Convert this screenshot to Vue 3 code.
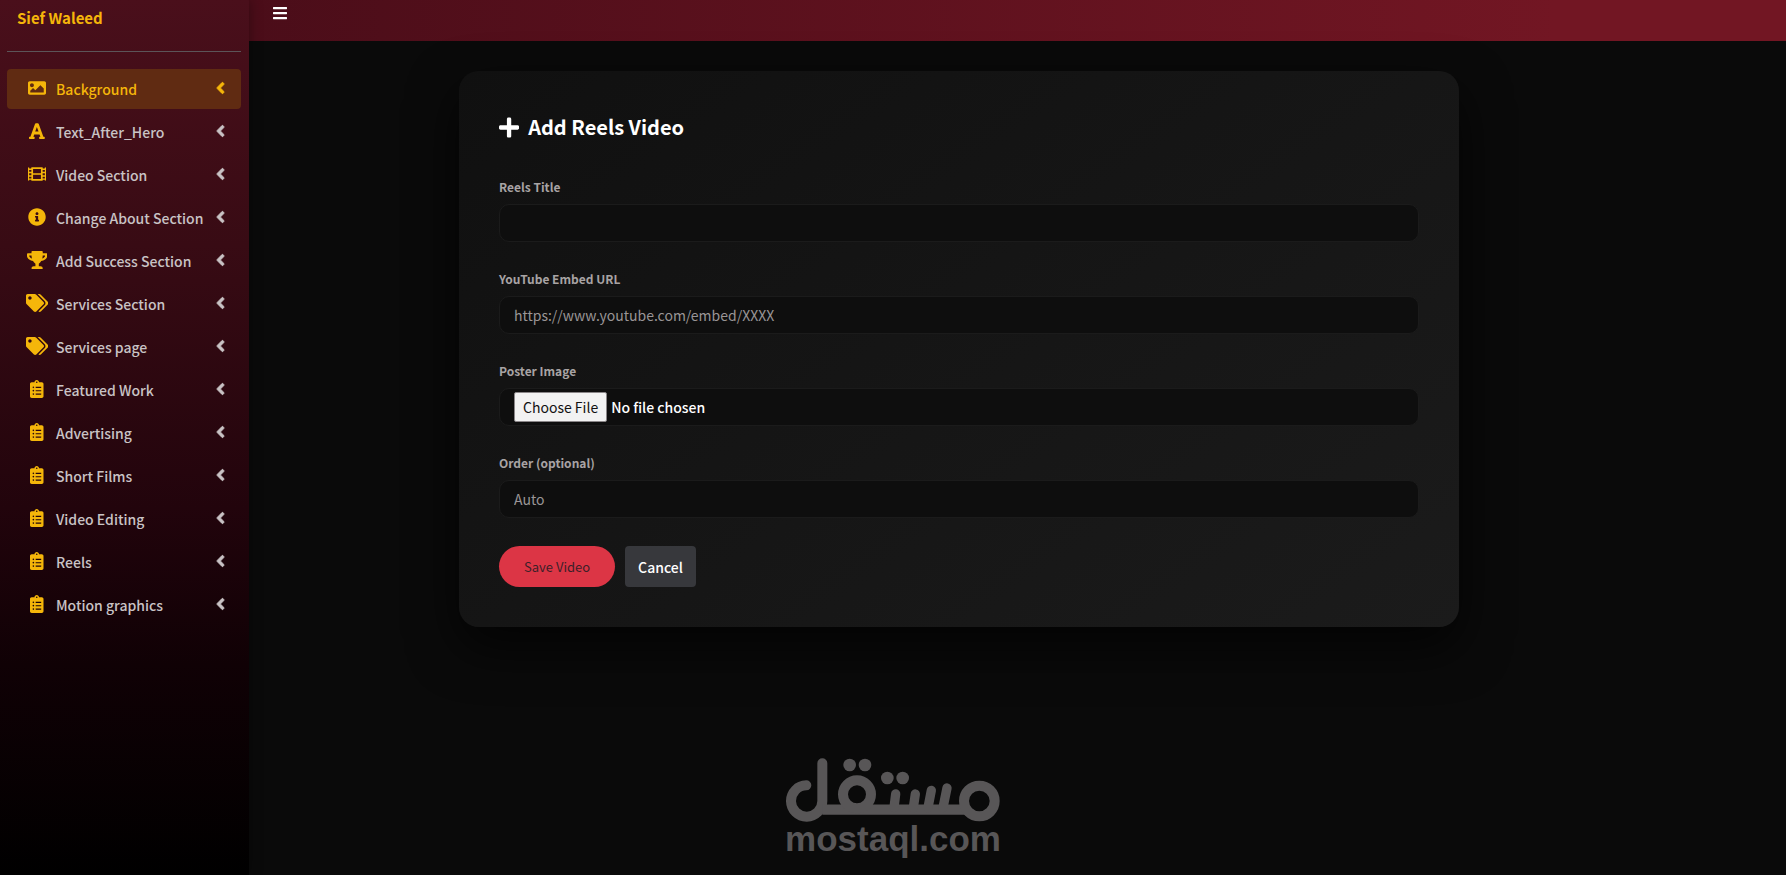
<script setup>
import { ref } from 'vue'

const icons = {
  image: {
    w: 512,
    d: 'M464 448H48c-26.51 0-48-21.49-48-48V112c0-26.51 21.49-48 48-48h416c26.51 0 48 21.49 48 48v288c0 26.51-21.49 48-48 48zM112 120c-30.928 0-56 25.072-56 56s25.072 56 56 56 56-25.072 56-56-25.072-56-56-56zM64 384h384V272l-87.515-87.515c-4.686-4.686-12.284-4.686-16.971 0L208 320l-55.515-55.515c-4.686-4.686-12.284-4.686-16.971 0L64 336v48z',
  },
  font: {
    w: 448,
    d: 'M432 416h-23.41L277.53 53.69A32 32 0 0 0 247.58 32h-47.16a32 32 0 0 0-29.95 21.69L39.41 416H16a16 16 0 0 0-16 16v32a16 16 0 0 0 16 16h128a16 16 0 0 0 16-16v-32a16 16 0 0 0-16-16h-19.58l23.3-64h152.56l23.3 64H304a16 16 0 0 0-16 16v32a16 16 0 0 0 16 16h128a16 16 0 0 0 16-16v-32a16 16 0 0 0-16-16zM176.85 272L224 142.51 271.15 272z',
  },
  film: {
    w: 512,
    d: 'M488 64h-8v20c0 6.6-5.4 12-12 12h-40c-6.6 0-12-5.4-12-12V64H96v20c0 6.6-5.4 12-12 12H44c-6.6 0-12-5.4-12-12V64h-8C10.7 64 0 74.7 0 88v336c0 13.3 10.7 24 24 24h8v-20c0-6.6 5.4-12 12-12h40c6.6 0 12 5.4 12 12v20h320v-20c0-6.6 5.4-12 12-12h40c6.6 0 12 5.4 12 12v20h8c13.3 0 24-10.7 24-24V88c0-13.3-10.7-24-24-24zM32 332h64v52H32zM32 236h64v52H32zM32 140h64v52H32zM144 112h224v120H144zM144 280h224v120H144zM416 332h64v52h-64zM416 236h64v52h-64zM416 140h64v52h-64z',
  },
  info: {
    w: 512,
    d: 'M256 8C119.043 8 8 119.083 8 256c0 136.997 111.043 248 248 248s248-111.003 248-248C504 119.083 392.957 8 256 8zm0 110c23.196 0 42 18.804 42 42s-18.804 42-42 42-42-18.804-42-42 18.804-42 42-42zm56 254c0 6.627-5.373 12-12 12h-88c-6.627 0-12-5.373-12-12v-24c0-6.627 5.373-12 12-12h12v-64h-12c-6.627 0-12-5.373-12-12v-24c0-6.627 5.373-12 12-12h64c6.627 0 12 5.373 12 12v100h12c6.627 0 12 5.373 12 12v24z',
  },
  trophy: {
    w: 576,
    d: 'M552 64H448V24c0-13.3-10.7-24-24-24H152c-13.3 0-24 10.7-24 24v40H24C10.7 64 0 74.7 0 88v56c0 35.7 22.5 72.4 61.9 100.7 31.5 22.7 69.8 37.1 110 41.7C203.3 338.5 240 360 240 360v72h-48c-35.3 0-64 20.7-64 56v12c0 6.6 5.4 12 12 12h296c6.6 0 12-5.4 12-12v-12c0-35.3-28.7-56-64-56h-48v-72s36.7-21.5 68.1-73.6c40.3-4.6 78.6-19 110-41.7 39.3-28.3 61.9-65 61.9-100.7V88c0-13.3-10.7-24-24-24zM99.3 192.8C74.9 175.2 64 155.6 64 144v-16h64.2c1 32.6 5.8 61.2 12.8 86.2-15.1-5.2-29.2-12.4-41.7-21.4zM512 144c0 16.1-17.7 36.1-35.3 48.8-12.5 9-26.7 16.2-41.8 21.4 7-25 11.8-53.6 12.8-86.2H512v16z',
  },
  tags: {
    w: 640,
    d: 'M497.941 225.941L286.059 14.059A48 48 0 0 0 252.118 0H48C21.49 0 0 21.49 0 48v204.118a48 48 0 0 0 14.059 33.941l211.882 211.882c18.744 18.745 49.136 18.746 67.882 0l204.118-204.118c18.745-18.745 18.745-49.137 0-67.882zM112 160c-26.51 0-48-21.49-48-48s21.49-48 48-48 48 21.49 48 48-21.49 48-48 48zm513.941 133.823L421.823 497.941c-18.745 18.745-49.137 18.745-67.882 0l-.36-.36L527.64 323.522c16.999-16.999 26.362-39.6 26.362-63.64s-9.362-46.641-26.362-63.64L331.397 0h48.721a48 48 0 0 1 33.941 14.059l211.882 211.882c18.745 18.745 18.745 49.137 0 67.882z',
  },
  list: {
    w: 384,
    d: 'M336 64h-80c0-35.3-28.7-64-64-64s-64 28.7-64 64H48C21.5 64 0 85.5 0 112v352c0 26.5 21.5 48 48 48h288c26.5 0 48-21.5 48-48V112c0-26.5-21.5-48-48-48zM96 424c-13.3 0-24-10.7-24-24s10.7-24 24-24 24 10.7 24 24-10.7 24-24 24zm0-96c-13.3 0-24-10.7-24-24s10.7-24 24-24 24 10.7 24 24-10.7 24-24 24zm0-96c-13.3 0-24-10.7-24-24s10.7-24 24-24 24 10.7 24 24-10.7 24-24 24zm96-192c13.3 0 24 10.7 24 24s-10.7 24-24 24-24-10.7-24-24 10.7-24 24-24zm128 368c0 4.4-3.6 8-8 8H168c-4.4 0-8-3.6-8-8v-16c0-4.4 3.6-8 8-8h144c4.4 0 8 3.6 8 8v16zm0-96c0 4.4-3.6 8-8 8H168c-4.4 0-8-3.6-8-8v-16c0-4.4 3.6-8 8-8h144c4.4 0 8 3.6 8 8v16zm0-96c0 4.4-3.6 8-8 8H168c-4.4 0-8-3.6-8-8v-16c0-4.4 3.6-8 8-8h144c4.4 0 8 3.6 8 8v16z',
  },
}

const items = [
  { label: 'Background', icon: 'image' },
  { label: 'Text_After_Hero', icon: 'font' },
  { label: 'Video Section', icon: 'film' },
  { label: 'Change About Section', icon: 'info' },
  { label: 'Add Success Section', icon: 'trophy' },
  { label: 'Services Section', icon: 'tags' },
  { label: 'Services page', icon: 'tags' },
  { label: 'Featured Work', icon: 'list' },
  { label: 'Advertising', icon: 'list' },
  { label: 'Short Films', icon: 'list' },
  { label: 'Video Editing', icon: 'list' },
  { label: 'Reels', icon: 'list' },
  { label: 'Motion graphics', icon: 'list' },
]

const active = ref('Background')
const title = ref('')
const url = ref('')
const order = ref('')
</script>

<template>
  <div class="layout">
    <aside class="sidebar">
      <a class="user" href="#">Sief Waleed</a>
      <nav>
        <ul class="menu">
          <li v-for="item in items" :key="item.label">
            <a
              href="#"
              class="link"
              :class="{ active: item.label === active }"
              @click.prevent="active = item.label"
            >
              <span class="icon">
                <svg :viewBox="`0 0 ${icons[item.icon].w} 512`" height="18" aria-hidden="true">
                  <path fill-rule="evenodd" :d="icons[item.icon].d" />
                </svg>
              </span>
              <span class="text">{{ item.label }}</span>
              <svg class="angle" viewBox="0 0 256 512" height="18" aria-hidden="true">
                <path d="M31.7 239l136-136c9.4-9.4 24.6-9.4 33.9 0l22.6 22.6c9.4 9.4 9.4 24.6 0 33.9L127.9 256l96.4 96.4c9.4 9.4 9.4 24.6 0 33.9L201.7 409c-9.4 9.4-24.6 9.4-33.9 0l-136-136c-9.5-9.4-9.5-24.6-.1-34z" />
              </svg>
            </a>
          </li>
        </ul>
      </nav>
    </aside>

    <div class="page">
      <header class="topbar">
        <button class="toggle" type="button" aria-label="Toggle menu">
          <svg viewBox="0 0 448 512" height="16" aria-hidden="true">
            <path d="M16 132h416c8.837 0 16-7.163 16-16V76c0-8.837-7.163-16-16-16H16C7.163 60 0 67.163 0 76v40c0 8.837 7.163 16 16 16zm0 160h416c8.837 0 16-7.163 16-16v-40c0-8.837-7.163-16-16-16H16c-8.837 0-16 7.163-16 16v40c0 8.837 7.163 16 16 16zm0 160h416c8.837 0 16-7.163 16-16v-40c0-8.837-7.163-16-16-16H16c-8.837 0-16 7.163-16 16v40c0 8.837 7.163 16 16 16z" />
          </svg>
        </button>
      </header>

      <main class="content">
        <form class="card" @submit.prevent>
          <h1 class="heading">
            <svg viewBox="0 0 448 512" height="23" aria-hidden="true">
              <path d="M416 208H272V64c0-17.67-14.33-32-32-32h-32c-17.67 0-32 14.33-32 32v144H32c-17.67 0-32 14.33-32 32v32c0 17.67 14.33 32 32 32h144v144c0 17.67 14.33 32 32 32h32c17.67 0 32-14.33 32-32V304h144c17.67 0 32-14.33 32-32v-32c0-17.67-14.33-32-32-32z" />
            </svg>
            <span>Add Reels Video</span>
          </h1>

          <div class="field">
            <label for="title">Reels Title</label>
            <input id="title" v-model="title" type="text" />
          </div>
          <div class="field">
            <label for="url">YouTube Embed URL</label>
            <input id="url" v-model="url" type="text" placeholder="https://www.youtube.com/embed/XXXX" />
          </div>
          <div class="field">
            <label for="poster">Poster Image</label>
            <input id="poster" type="file" accept="image/*" />
          </div>
          <div class="field">
            <label for="order">Order (optional)</label>
            <input id="order" v-model="order" type="text" inputmode="numeric" placeholder="Auto" />
          </div>

          <div class="actions">
            <button class="save" type="submit">Save Video</button>
            <button class="cancel" type="button">Cancel</button>
          </div>
        </form>
      </main>
    </div>

    <div class="watermark">
      <svg viewBox="78 50 642 195" width="214" height="65" role="img" aria-label="مستقل">
        <g fill="none" stroke="currentColor" stroke-width="30" stroke-linecap="round">
          <path d="M187 69V182A47 47 0 1 1 139 135" />
          <path d="M187 208H625" stroke-linecap="butt" stroke-width="31" />
          <circle cx="291" cy="162" r="42" />
          <circle cx="658" cy="182" r="46" />
          <path d="M407 161L402 202M466 161L460 202M514 150L504 202M561 143L549 202" stroke-width="28" />
        </g>
        <g fill="currentColor">
          <circle cx="269" cy="74" r="19" />
          <circle cx="315" cy="74" r="19" />
          <circle cx="382" cy="113" r="19" />
          <circle cx="428" cy="113" r="19" />
        </g>
      </svg>
      <span>mostaql.com</span>
    </div>
  </div>
</template>

<style>
body {
  margin: 0;
  background: #0a0a0a;
}
</style>

<style scoped>
.layout {
  display: flex;
  min-height: 100vh;
  font-family: "Noto Sans CJK SC", "Noto Sans", sans-serif;
  font-size: 14px;
  line-height: 24px;
  color: #fff;
}

.layout *,
.layout *::before {
  box-sizing: border-box;
}

svg {
  display: block;
  fill: currentColor;
}

.sidebar {
  position: relative;
  z-index: 1;
  flex: none;
  width: 249px;
  padding: 0 8px 0 7px;
  background: linear-gradient(180deg, #4a0f1b 0%, #380b14 28%, #22040c 58%, #100105 76%, #000 100%);
  box-shadow: 0 0 12px rgba(0, 0, 0, 0.35);
}

.user {
  display: block;
  margin-bottom: 17px;
  padding: 6px 10px 21px;
  border-bottom: 1px solid #5c5458;
  color: #f5b60a;
  font-size: 15px;
  font-weight: 700;
  text-decoration: none;
}

.menu {
  display: flex;
  flex-direction: column;
  gap: 3px;
  margin: 0;
  padding: 0;
  list-style: none;
}

.link {
  display: flex;
  align-items: center;
  height: 40px;
  padding: 0 16px;
  border-radius: 4px;
  color: #c9c3c5;
  font-weight: 500;
  text-decoration: none;
}

.link.active {
  background: #602b12;
  color: #f5b60a;
}

.icon {
  display: flex;
  justify-content: center;
  width: 28px;
  margin-right: 5px;
  padding-bottom: 2px;
  color: #f5b60a;
}

.text {
  flex: 1;
  white-space: nowrap;
}

.angle {
  margin-bottom: 2px;
  stroke: currentColor;
  stroke-width: 20;
}

.page {
  flex: 1;
  min-width: 0;
}

.topbar {
  height: 41px;
  padding: 5px 24px;
  background: linear-gradient(90deg, #4b0d19, #721623 85%);
}

.toggle {
  display: block;
  padding: 0;
  border: 0;
  background: none;
  color: #fff;
}

.content {
  padding: 30px 117px 40px 0;
}

.card {
  max-width: 1000px;
  margin: 0 auto;
  padding: 40px;
  border-radius: 20px;
  background: linear-gradient(145deg, #101010, #1b1b1b);
  box-shadow: 0 20px 50px rgba(0, 0, 0, 0.7);
}

.heading {
  display: flex;
  align-items: center;
  gap: 9px;
  margin: 0 0 35px;
  font-size: 20px;
  line-height: 32px;
  font-weight: 700;
}

.field {
  margin-bottom: 28px;
}

.field label {
  display: block;
  margin-bottom: 8px;
  color: #a8a3a4;
  font-size: 12px;
  line-height: 18px;
  font-weight: 700;
}

.field input {
  display: block;
  width: 100%;
  height: 38px;
  padding: 0 14px;
  border: 1px solid #1b1b1b;
  border-radius: 10px;
  background: #0e0e0e;
  color: #fff;
  font: inherit;
}

.field input::placeholder {
  color: #9a9596;
  opacity: 1;
}

.field input[type="file"] {
  padding-top: 3px;
  font-weight: 500;
}

.field input::file-selector-button {
  height: 30px;
  margin: 0 4px 0 0;
  padding: 0 8px;
  border: 1px solid #8a8688;
  border-radius: 2px;
  background: #f2f2f2;
  color: #111;
  font: inherit;
  font-weight: 400;
}

.actions {
  display: flex;
  gap: 10px;
}

.actions button {
  height: 41px;
  border: 0;
  font: inherit;
}

.actions .save {
  padding: 0 25px;
  border-radius: 21px;
  background: #dc3545;
  color: #3c2029;
  font-size: 13px;
}

.actions .cancel {
  padding: 0 13px;
  border-radius: 4px;
  background: #37383c;
  color: #fff;
  font-weight: 500;
}

.watermark {
  position: absolute;
  right: 0;
  bottom: 19px;
  left: 0;
  display: flex;
  flex-direction: column;
  align-items: center;
  color: #585657;
  pointer-events: none;
}

.watermark span {
  font-family: "Liberation Sans", Arial, sans-serif;
  font-size: 35px;
  line-height: 34px;
  font-weight: 700;
}
</style>
